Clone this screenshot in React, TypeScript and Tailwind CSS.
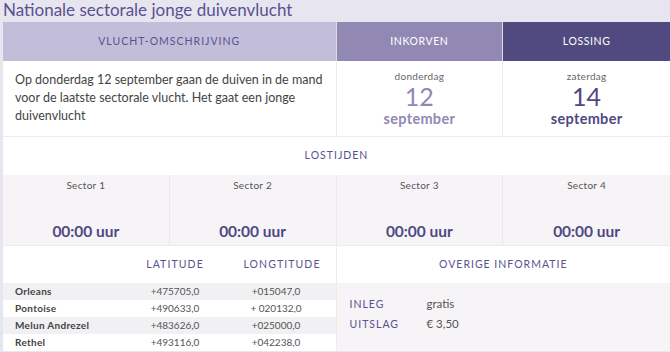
import React from "react";

const purple = "text-[#585290]";

export default function App() {
  const rows = [
    ["Orleans", "+475705,0", "+015047,0"],
    ["Pontoise", "+490633,0", "+ 020132,0"],
    ["Melun Andrezel", "+483626,0", "+025000,0"],
    ["Rethel", "+493116,0", "+042238,0"],
  ];
  return (
    <div className="w-[670px] h-[352px] overflow-hidden bg-[#e7e5ef] font-['Lato',sans-serif]">
      <div className={`h-[22px] pl-[3px] text-[17px] leading-[20px] ${purple} font-['Lato',sans-serif]`}>
        Nationale sectorale jonge duivenvlucht
      </div>
      <div className="ml-[3px] w-[667px] bg-white grid grid-cols-4">
        {/* header */}
        <div className="col-span-2 h-[39px] bg-[#c2bed9] flex items-center justify-center text-[10.5px] tracking-[1px] text-[#585290] border-r border-[#ddd]">
          VLUCHT-OMSCHRIJVING
        </div>
        <div className="h-[39px] bg-[#9189b4] flex items-center justify-center text-[10.5px] tracking-[0.6px] text-white border-r border-[#ddd]">
          INKORVEN
        </div>
        <div className="h-[39px] bg-[#514a80] flex items-center justify-center text-[10.5px] tracking-[0.6px] text-white">
          LOSSING
        </div>
        {/* row 2 */}
        <div className="col-span-2 h-[76px] px-[12px] pt-[10px] text-[12.5px] leading-[18px] text-[#444] border-r border-b border-[#ececec]">
          Op donderdag 12 september gaan de duiven in de mand voor de laatste sectorale vlucht. Het gaat een jonge duivenvlucht
        </div>
        <div className="h-[76px] flex flex-col items-center pt-[8px] border-r border-b border-[#ececec]">
          <div className="text-[10px] leading-[14px] text-[#666] tracking-[0.3px]">donderdag</div>
          <div className="text-[25px] leading-[26px] text-[#9189b4]">12</div>
          <div className="mt-[1px] text-[14.5px] leading-[18px] font-bold text-[#9189b4] tracking-[0.3px]">september</div>
        </div>
        <div className="h-[76px] flex flex-col items-center pt-[8px] border-b border-[#ececec]">
          <div className="text-[10px] leading-[14px] text-[#666] tracking-[0.3px]">zaterdag</div>
          <div className="text-[25px] leading-[26px] text-[#4f4882]">14</div>
          <div className="mt-[1px] text-[14.5px] leading-[18px] font-bold text-[#4f4882] tracking-[0.3px]">september</div>
        </div>
        {/* lostijden */}
        <div className="col-span-4 h-[38px] flex items-center justify-center text-[10.5px] tracking-[1px] text-[#585290]">
          LOSTIJDEN
        </div>
        {[1, 2, 3, 4].map((n) => (
          <div
            key={n}
            className={`h-[70px] bg-[#f6f4f6] flex flex-col items-center pt-[3px] ${n < 4 ? "border-r border-[#ebe9ec]" : ""}`}
          >
            <div className="text-[10px] leading-[14px] text-[#555] tracking-[0.3px]">Sector {n}</div>
            <div className="mt-auto mb-[4px] text-[15.5px] leading-[20px] font-bold text-[#4f4882]">00:00 uur</div>
          </div>
        ))}
        {/* bottom left */}
        <div className="col-span-2 border-r border-[#ececec] border-t">
          <div className="flex h-[37px] items-center text-[10.5px] tracking-[1.1px] text-[#585290]">
            <div className="w-[110px]" />
            <div className="w-[124px] text-center">LATITUDE</div>
            <div className="w-[90px] text-center">LONGTITUDE</div>
          </div>
          {rows.map((r, i) => (
            <div key={r[0]} className={`flex h-[17px] items-center text-[10px] ${i % 2 === 0 ? "bg-[#f1f0f2]" : "bg-white"}`}>
              <div className="w-[110px] pl-[12px] font-bold text-[#444] tracking-[0.3px]">{r[0]}</div>
              <div className="w-[124px] text-center text-[#555]">{r[1]}</div>
              <div className="w-[78px] text-center text-[#555]">{r[2]}</div>
            </div>
          ))}
        </div>
        {/* bottom right */}
        <div className="col-span-2 border-t border-[#ececec] flex flex-col">
          <div className="h-[37px] flex items-center justify-center text-[10.5px] tracking-[1px] text-[#585290]">
            OVERIGE INFORMATIE
          </div>
          <div className="flex-1 bg-[#f6f4f6] pl-[13px] pt-[11px] text-[11.5px] leading-[20px]">
            <div className="flex">
              <div className="w-[77px] text-[10.5px] tracking-[1px] text-[#585290]">INLEG</div>
              <div className="text-[#555]">gratis</div>
            </div>
            <div className="flex">
              <div className="w-[77px] text-[10.5px] tracking-[1px] text-[#585290]">UITSLAG</div>
              <div className="text-[#555]">€ 3,50</div>
            </div>
          </div>
        </div>
      </div>
    </div>
  );
}
